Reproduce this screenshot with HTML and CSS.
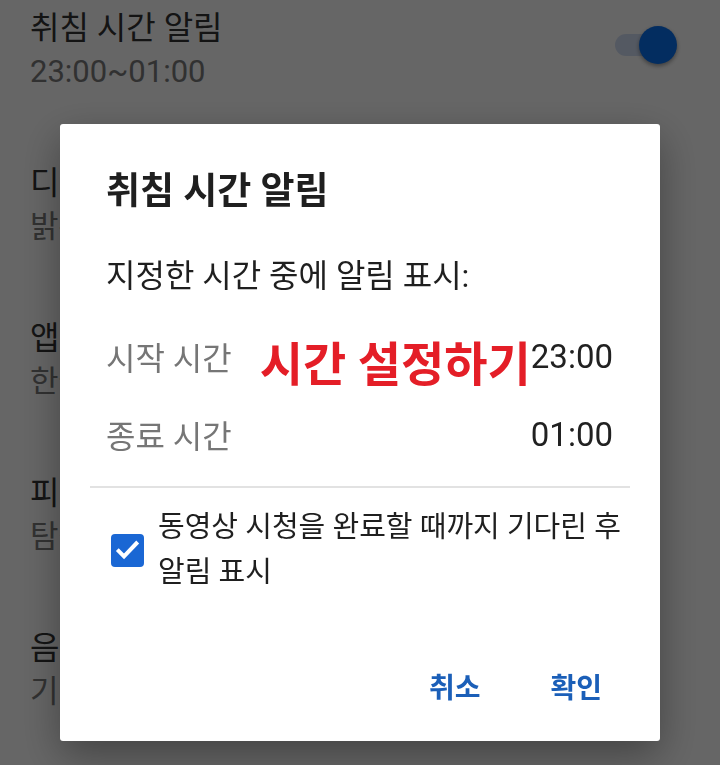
FILE: index.html
```html
<!DOCTYPE html>
<html lang="ko">
<head>
    <meta charset="UTF-8">
    <meta name="viewport" content="width=device-width, initial-scale=1.0">
    <title>취침 시간 알림</title>
    <link rel="stylesheet" href="styles.css">
</head>
<body>
    <div class="settings">
        <div class="setting">
            <div class="setting-text">
                <p class="setting-title">취침 시간 알림</p>
                <p class="setting-sub">23:00~01:00</p>
            </div>
            <span class="switch"><span class="switch-thumb"></span></span>
        </div>
        <div class="setting">
            <div class="setting-text">
                <p class="setting-title">디자인</p>
                <p class="setting-sub">밝은 테마</p>
            </div>
        </div>
        <div class="setting">
            <div class="setting-text">
                <p class="setting-title">앱 언어</p>
                <p class="setting-sub">한국어</p>
            </div>
        </div>
        <div class="setting">
            <div class="setting-text">
                <p class="setting-title">피드에서 재생</p>
                <p class="setting-sub">탐색 피드에서 동영상 재생</p>
            </div>
        </div>
        <div class="setting">
            <div class="setting-text">
                <p class="setting-title">음성 검색 언어</p>
                <p class="setting-sub">기기 언어</p>
            </div>
        </div>
    </div>

    <div class="scrim">
        <div class="dialog">
            <h2 class="dialog-title">취침 시간 알림</h2>
            <p class="dialog-desc">지정한 시간 중에 알림 표시:</p>

            <div class="time-row first">
                <span class="time-label">시작 시간</span>
                <span class="hint">시간 설정하기</span>
                <span class="time-value">23:00</span>
            </div>
            <div class="time-row">
                <span class="time-label">종료 시간</span>
                <span class="time-value">01:00</span>
            </div>

            <div class="divider"></div>

            <label class="check-row">
                <span class="checkbox">
                    <svg viewBox="0 0 33 33" width="33" height="33">
                        <polyline points="6.3,15.7 13,22.3 26.7,8" fill="none" stroke="#fff" stroke-width="4"/>
                    </svg>
                </span>
                <span class="check-text">동영상 시청을 완료할 때까지 기다린 후<br>알림 표시</span>
            </label>

            <div class="actions">
                <button class="action">취소</button>
                <button class="action">확인</button>
            </div>
        </div>
    </div>
</body>
</html>
```

FILE: styles.css
```css
* {
    margin: 0;
    padding: 0;
    box-sizing: border-box;
}

html, body {
    width: 100vw;
    height: 100vh;
    background-color: #fff;
    font-family: Roboto, 'Noto Sans CJK KR', sans-serif;
    overflow: hidden;
}

/* settings list behind the dialog */
.settings {
    padding-top: 6px;
}

.setting {
    display: flex;
    height: 155px;
    padding: 0 43px 0 30px;
}

.setting-text {
    flex: 1;
}

.setting-title {
    font-size: 32px;
    line-height: 44px;
    color: #333;
    white-space: nowrap;
}

.setting-sub {
    font-size: 31px;
    line-height: 44px;
    color: #7c7c7c;
    white-space: nowrap;
}

.switch {
    position: relative;
    width: 62px;
    height: 22px;
    margin-top: 28px;
}

.switch::before {
    content: '';
    position: absolute;
    left: 0;
    top: 0;
    width: 38px;
    height: 22px;
    border-radius: 11px;
    background-color: #d3dff5;
}

.switch-thumb {
    position: absolute;
    right: 0;
    top: -8px;
    width: 38px;
    height: 38px;
    border-radius: 50%;
    background-color: #0870f0;
    box-shadow: 0 2px 4px rgba(0, 0, 0, 0.4);
}

/* dim layer + dialog */
.scrim {
    position: fixed;
    top: 0;
    left: 0;
    width: 100%;
    height: 100%;
    display: flex;
    justify-content: center;
    align-items: flex-start;
    padding-top: 124px;
    background-color: rgba(0, 0, 0, 0.6);
}

.dialog {
    width: 600px;
    height: 617px;
    padding: 48px 47px 0 46px;
    background-color: #fff;
    border-radius: 3px;
    box-shadow: 0 14px 40px rgba(0, 0, 0, 0.35);
    color: #1f1f1f;
}

.dialog-title {
    font-size: 37px;
    line-height: 40px;
    font-weight: 700;
}

.dialog-desc {
    margin-top: 44px;
    font-size: 32px;
    line-height: 40px;
}

.time-row {
    display: flex;
    align-items: center;
    height: 78px;
}

.time-row.first {
    margin-top: 21px;
}

.time-label {
    font-size: 32px;
    color: #767676;
}

.hint {
    margin-left: 28px;
    margin-top: 8px;
    font-size: 47px;
    font-weight: 700;
    color: #e41e27;
    white-space: nowrap;
}

.time-value {
    margin-left: auto;
    font-size: 33px;
    color: #212121;
}

.divider {
    height: 2px;
    margin: 13px -17px 17px -16px;
    background-color: #e2e2e2;
}

.check-row {
    display: flex;
    align-items: center;
    gap: 14px;
    padding-left: 5px;
    margin-right: -20px;
}

.checkbox {
    display: flex;
    flex-shrink: 0;
    width: 33px;
    height: 33px;
    border-radius: 4px;
    background-color: #1a67d4;
}

.check-text {
    font-size: 29px;
    line-height: 45px;
    white-space: nowrap;
}

.actions {
    display: flex;
    justify-content: flex-end;
    height: 56px;
    margin-top: 63px;
    margin-right: -24px;
}

.action {
    padding: 0 35px;
    border: none;
    background: none;
    font-family: Roboto, 'Noto Sans CJK KR', sans-serif;
    font-size: 28px;
    font-weight: 700;
    color: #1b5fb8;
}
```
